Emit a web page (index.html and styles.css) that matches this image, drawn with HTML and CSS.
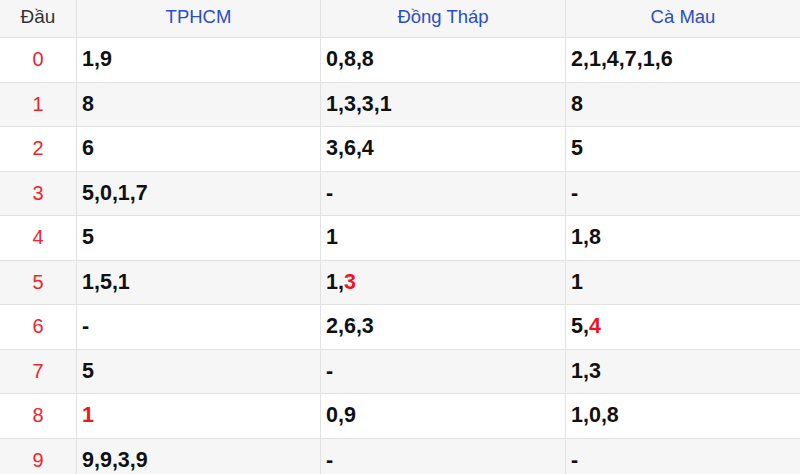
FILE: index.html
```html
<!DOCTYPE html>
<html lang="vi">
<head>
<meta charset="utf-8">
<link rel="stylesheet" href="styles.css">
</head>
<body>
<div class="table">
  <div class="row head">
    <div class="cell c1">Đầu</div>
    <div class="cell prov">TPHCM</div>
    <div class="cell prov">Đồng Tháp</div>
    <div class="cell prov">Cà Mau</div>
  </div>
  <div class="row">
    <div class="cell c1">0</div>
    <div class="cell val">1,9</div>
    <div class="cell val">0,8,8</div>
    <div class="cell val">2,1,4,7,1,6</div>
  </div>
  <div class="row alt">
    <div class="cell c1">1</div>
    <div class="cell val">8</div>
    <div class="cell val">1,3,3,1</div>
    <div class="cell val">8</div>
  </div>
  <div class="row">
    <div class="cell c1">2</div>
    <div class="cell val">6</div>
    <div class="cell val">3,6,4</div>
    <div class="cell val">5</div>
  </div>
  <div class="row alt">
    <div class="cell c1">3</div>
    <div class="cell val">5,0,1,7</div>
    <div class="cell val">-</div>
    <div class="cell val">-</div>
  </div>
  <div class="row">
    <div class="cell c1">4</div>
    <div class="cell val">5</div>
    <div class="cell val">1</div>
    <div class="cell val">1,8</div>
  </div>
  <div class="row alt">
    <div class="cell c1">5</div>
    <div class="cell val">1,5,1</div>
    <div class="cell val">1,<span class="hl">3</span></div>
    <div class="cell val">1</div>
  </div>
  <div class="row">
    <div class="cell c1">6</div>
    <div class="cell val">-</div>
    <div class="cell val">2,6,3</div>
    <div class="cell val">5,<span class="hl">4</span></div>
  </div>
  <div class="row alt">
    <div class="cell c1">7</div>
    <div class="cell val">5</div>
    <div class="cell val">-</div>
    <div class="cell val">1,3</div>
  </div>
  <div class="row">
    <div class="cell c1">8</div>
    <div class="cell val"><span class="hl">1</span></div>
    <div class="cell val">0,9</div>
    <div class="cell val">1,0,8</div>
  </div>
  <div class="row alt">
    <div class="cell c1">9</div>
    <div class="cell val">9,9,3,9</div>
    <div class="cell val">-</div>
    <div class="cell val">-</div>
  </div>
</div>
</body>
</html>
```

FILE: styles.css
```css
html, body {
  margin: 0;
  padding: 0;
  background: #ffffff;
  overflow: hidden;
}
body {
  font-family: "Liberation Sans", Arial, sans-serif;
  width: 800px;
  height: 474px;
}
.table {
  display: flex;
  flex-direction: column;
  width: 800px;
}
.row {
  display: grid;
  grid-template-columns: 76px 243px 244px 234px;
  column-gap: 1px;
  background: #e2e2e2;
  height: 43.5px;
  border-bottom: 1px solid #e2e2e2;
}
.row.head {
  height: 37px;
}
.cell {
  display: flex;
  align-items: center;
  background: #ffffff;
  padding: 0 0 0 5px;
}
.head .cell, .row.alt .cell {
  background: #f6f6f6;
}
.c1 {
  justify-content: center;
  padding: 0;
  color: #f0242a;
  font-size: 20px;
}
.head .c1 {
  color: #333333;
  font-size: 19px;
  padding-bottom: 3px;
}
.prov {
  justify-content: center;
  padding: 0 0 3px 0;
  color: #2a4dc8;
  font-size: 18.5px;
}
.val {
  font-weight: bold;
  font-size: 21.5px;
  color: #111111;
}
.hl {
  color: #f0141e;
}
```
